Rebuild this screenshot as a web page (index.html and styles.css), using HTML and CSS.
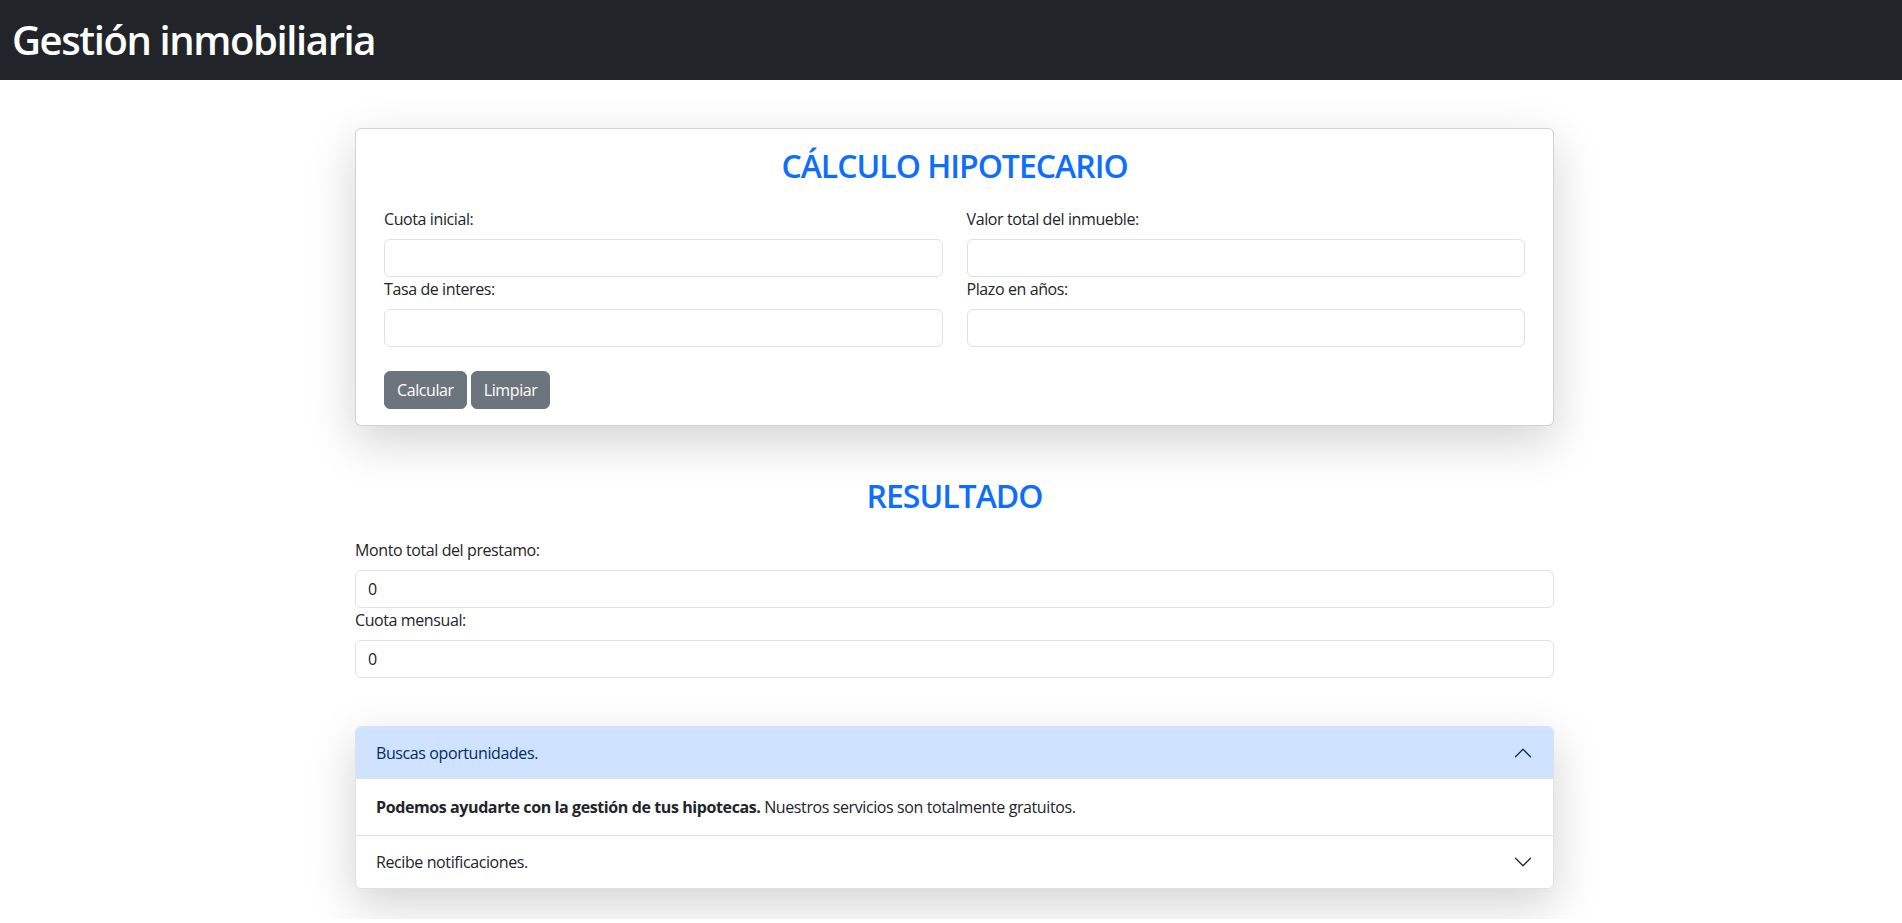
FILE: index.html
```html
<!DOCTYPE html>
<html lang="es">
<head>
<meta charset="utf-8">
<title>Gestión inmobiliaria</title>
<link rel="stylesheet" href="styles.css">
</head>
<body>
<header class="navbar">
  <h1 class="brand">Gestión inmobiliaria</h1>
</header>
<main class="page">
  <section class="card">
    <h2 class="title">CÁLCULO HIPOTECARIO</h2>
    <div class="grid">
      <div class="col">
        <label class="label">Cuota inicial:</label>
        <input class="field" type="text">
        <label class="label">Tasa de interes:</label>
        <input class="field" type="text">
      </div>
      <div class="col">
        <label class="label">Valor total del inmueble:</label>
        <input class="field" type="text">
        <label class="label">Plazo en años:</label>
        <input class="field" type="text">
      </div>
    </div>
    <div class="actions">
      <button class="btn" type="button">Calcular</button>
      <button class="btn" type="button">Limpiar</button>
    </div>
  </section>

  <section class="result">
    <h2 class="title result-title">RESULTADO</h2>
    <div class="result-fields">
      <label class="label">Monto total del prestamo:</label>
      <input class="field" type="text" value="0">
      <label class="label">Cuota mensual:</label>
      <input class="field" type="text" value="0">
    </div>
  </section>

  <section class="accordion">
    <div class="acc-item">
      <div class="acc-header active">
        <span>Buscas oportunidades.</span>
        <svg class="chev up" viewBox="0 0 16 16" fill="none" stroke="#052c65" stroke-linecap="round" stroke-linejoin="round"><path d="M2 11L8 5L14 11"/></svg>
      </div>
      <div class="acc-body"><strong>Podemos ayudarte con la gestión de tus hipotecas.</strong> Nuestros servicios son totalmente gratuitos.</div>
    </div>
    <div class="acc-item">
      <div class="acc-header">
        <span>Recibe notificaciones.</span>
        <svg class="chev" viewBox="0 0 16 16" fill="none" stroke="#212529" stroke-linecap="round" stroke-linejoin="round"><path d="M2 5L8 11L14 5"/></svg>
      </div>
    </div>
  </section>
</main>
</body>
</html>
```

FILE: styles.css
```css
* { box-sizing: border-box; }

body {
  margin: 0;
  font-family: "Open Sans", "Noto Sans", sans-serif;
  font-size: 16px;
  line-height: 1.5;
  letter-spacing: -0.4px;
  color: #212529;
  background: #fff;
}

.navbar {
  height: 80px;
  background: #212529;
  display: flex;
  align-items: center;
  padding: 0 12px;
}

.brand {
  margin: 0;
  font-size: 40px;
  font-weight: 600;
  line-height: 1.2;
  color: #fff;
  letter-spacing: -1.4px;
}

.page {
  width: 1199px;
  margin-left: 355px;
  padding-bottom: 30px;
}

.card {
  margin-top: 48px;
  border: 1px solid rgba(0, 0, 0, 0.175);
  border-radius: 6px;
  background: #fff;
  padding: 18px 16px 16px;
  box-shadow: 0 16px 48px rgba(0, 0, 0, 0.175);
}

.title {
  margin: 0 0 8px;
  text-align: center;
  color: #0d6efd;
  font-size: 32px;
  font-weight: 600;
  line-height: 1.2;
  letter-spacing: -1px;
}

.grid {
  margin-top: 22px;
  display: grid;
  grid-template-columns: 1fr 1fr;
  column-gap: 24px;
  padding: 0 12px;
}

.col {
  display: flex;
  flex-direction: column;
}

.label {
  display: block;
  font-size: 16px;
  line-height: 24px;
  margin-bottom: 8px;
}

.field {
  display: block;
  width: 100%;
  height: 38px;
  padding: 6px 12px;
  font-family: inherit;
  font-size: 16px;
  line-height: 24px;
  letter-spacing: inherit;
  color: #212529;
  background: #fff;
  border: 1px solid #dee2e6;
  border-radius: 6px;
  outline: none;
}

.actions {
  margin-top: 24px;
  padding: 0 12px;
  display: flex;
  gap: 4px;
}

.btn {
  height: 38px;
  padding: 6px 12px;
  font-family: inherit;
  font-size: 16px;
  line-height: 24px;
  letter-spacing: inherit;
  color: #fff;
  background: #6c757d;
  border: 1px solid #6c757d;
  border-radius: 6px;
}

.result-title {
  margin-top: 51px;
  margin-bottom: 22px;
}

.accordion {
  margin-top: 48px;
  border: 1px solid #dee2e6;
  border-radius: 6px;
  overflow: hidden;
  background: #fff;
  box-shadow: 0 16px 48px rgba(0, 0, 0, 0.175);
}

.acc-item + .acc-item {
  border-top: 1px solid #dee2e6;
}

.acc-header {
  height: 52px;
  padding: 14px 20px;
  display: flex;
  align-items: center;
  justify-content: space-between;
  font-size: 16px;
  line-height: 24px;
  color: #212529;
}

.acc-header.active {
  background: #cfe2ff;
  color: #052c65;
  box-shadow: inset 0 -1px 0 #dee2e6;
}

.chev {
  width: 20px;
  height: 20px;
  flex: none;
}

.acc-body {
  padding: 16px 20px;
  line-height: 24px;
}

.acc-body strong {
  font-weight: 700;
}
```
